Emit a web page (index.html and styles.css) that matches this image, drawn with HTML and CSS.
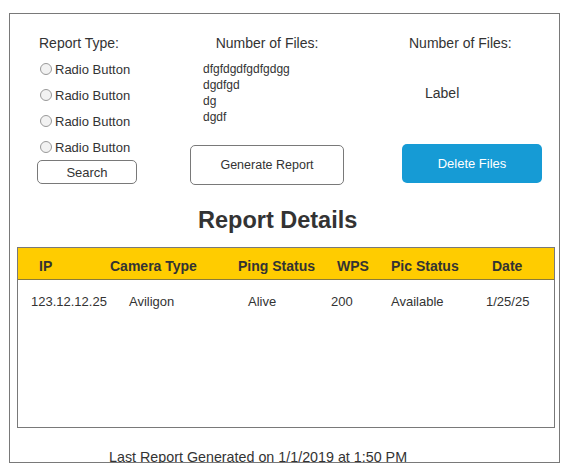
FILE: index.html
```html
<!DOCTYPE html>
<html>
<head>
<meta charset="utf-8">
<link rel="stylesheet" href="styles.css">
</head>
<body>
<div class="frame">
  <div class="top">
    <div class="col col-type">
      <div class="title">Report Type:</div>
      <div class="radios">
        <label class="radio"><span class="dot"></span>Radio Button</label>
        <label class="radio"><span class="dot"></span>Radio Button</label>
        <label class="radio"><span class="dot"></span>Radio Button</label>
        <label class="radio"><span class="dot"></span>Radio Button</label>
      </div>
      <button class="btn btn-search">Search</button>
    </div>
    <div class="col col-files">
      <div class="title center">Number of Files:</div>
      <div class="files">
        <div>dfgfdgdfgdfgdgg</div>
        <div>dgdfgd</div>
        <div>dg</div>
        <div>dgdf</div>
      </div>
      <button class="btn btn-generate">Generate Report</button>
    </div>
    <div class="col col-delete">
      <div class="title pad7">Number of Files:</div>
      <div class="label">Label</div>
      <button class="btn btn-delete">Delete Files</button>
    </div>
  </div>
  <h1 class="heading">Report Details</h1>
  <div class="table">
    <div class="row head">
      <span>IP</span><span>Camera Type</span><span>Ping Status</span><span>WPS</span><span>Pic Status</span><span>Date</span>
    </div>
    <div class="row data">
      <span>123.12.12.25</span><span>Aviligon</span><span>Alive</span><span>200</span><span>Available</span><span>1/25/25</span>
    </div>
  </div>
  <div class="footer">Last Report Generated on 1/1/2019 at 1:50 PM</div>
</div>
</body>
</html>
```

FILE: styles.css
```css
* { box-sizing: border-box; }
body {
  margin: 0;
  font-family: "Liberation Sans", Arial, sans-serif;
  color: #333333;
  background: #ffffff;
}
.frame {
  margin: 13px 0 0 9px;
  width: 551px;
  height: 450px;
  border: 1px solid #797979;
  display: flex;
  flex-direction: column;
}
.top {
  display: flex;
  padding: 21px 0 0 27px;
}
.col {
  display: flex;
  flex-direction: column;
}
.col-type { width: 100px; }
.col-files { width: 154px; margin-left: 53px; }
.col-delete { width: 140px; margin-left: 58px; }
.title {
  font-size: 14px;
  line-height: 16px;
  height: 16px;
  white-space: nowrap;
}
.col-type .title { padding-left: 2px; }
.center { text-align: center; }
.pad7 { padding-left: 7px; }
.radios {
  margin-top: 10px;
  display: flex;
  flex-direction: column;
  gap: 10px;
}
.radio {
  display: flex;
  align-items: center;
  height: 16px;
  font-size: 13px;
  white-space: nowrap;
}
.dot {
  width: 12px;
  height: 12px;
  border-radius: 50%;
  border: 1px solid #999999;
  background: #f2f2f2;
  margin: 0 3px 0 3px;
  flex: none;
}
.btn {
  font-family: inherit;
  color: #333333;
  background: #ffffff;
  border: 1px solid #797979;
  border-radius: 5px;
  padding: 0;
  cursor: pointer;
}
.btn-search {
  margin-top: 5px;
  width: 100px;
  height: 24px;
  font-size: 13px;
}
.files {
  margin-top: 10px;
  padding-left: 13px;
  font-size: 12px;
  line-height: 16px;
}
.btn-generate {
  margin-top: 20px;
  width: 154px;
  height: 40px;
  font-size: 12.5px;
}
.label {
  margin-top: 34px;
  padding-left: 23px;
  font-size: 14px;
  line-height: 16px;
}
.btn-delete {
  margin-top: 43px;
  width: 140px;
  height: 39px;
  font-size: 13px;
  color: #ffffff;
  background: #169bd5;
  border: none;
}
.heading {
  margin: 22px 0 0 0;
  padding-left: 188px;
  font-size: 23.5px;
  line-height: 26px;
  font-weight: bold;
  color: #333333;
}
.table {
  margin: 14px 4px 0 7px;
  height: 181px;
  border: 1px solid #797979;
  flex: none;
}
.row {
  display: grid;
  white-space: nowrap;
}
.head {
  height: 32px;
  background: #ffcc00;
  border-bottom: 1px solid #8a7a3a;
  padding: 10px 0 0 21px;
  grid-template-columns: 71px 128px 99px 54px 101px 1fr;
  font-size: 14px;
  line-height: 16px;
  font-weight: bold;
}
.data {
  padding: 14px 0 0 13px;
  grid-template-columns: 98px 119px 83px 60px 95px 1fr;
  font-size: 13px;
  line-height: 15px;
}
.footer {
  margin-top: 21px;
  padding-left: 99px;
  font-size: 14.3px;
  line-height: 16px;
  white-space: nowrap;
}
```
